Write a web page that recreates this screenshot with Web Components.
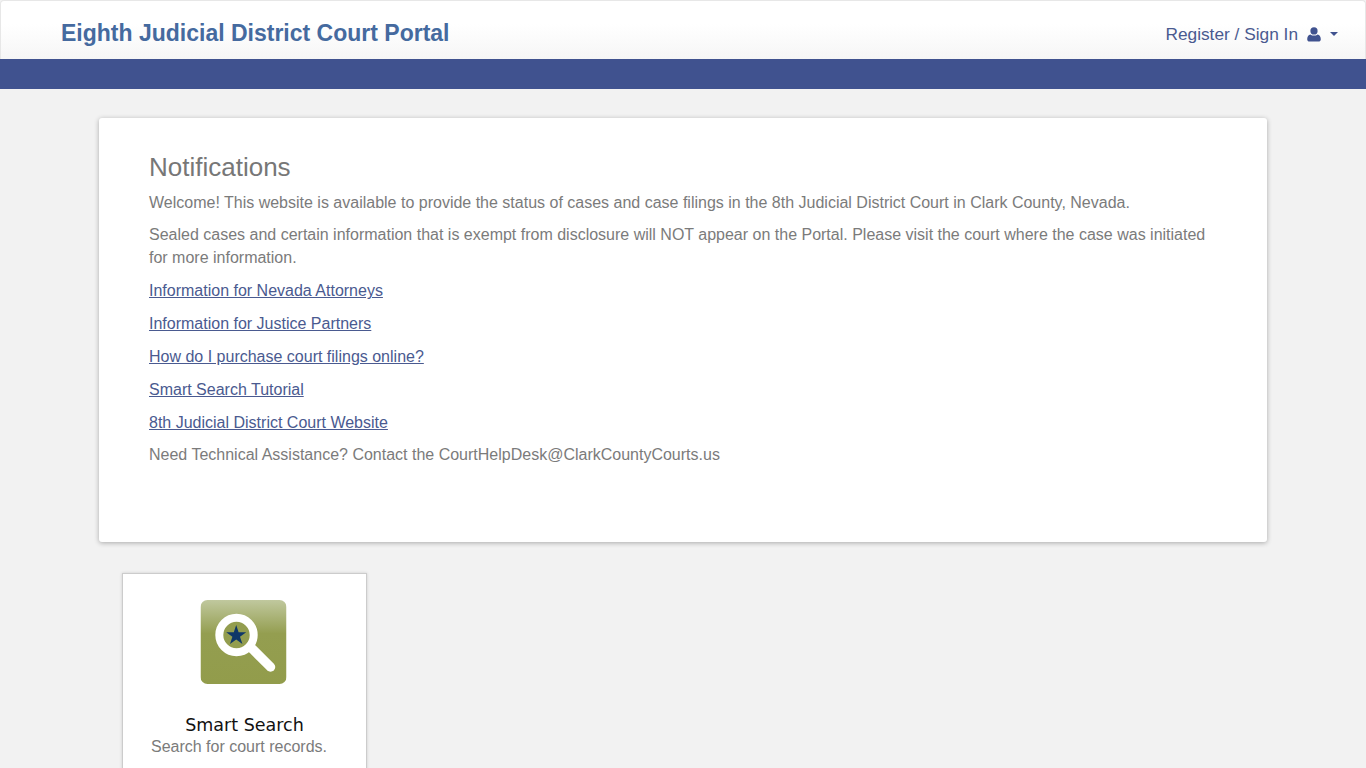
<!DOCTYPE html>
<html lang="en">
<head>
<meta charset="utf-8">
<title>Eighth Judicial District Court Portal</title>
<style>
  html, body { margin: 0; padding: 0; height: 768px; overflow: hidden; }
  body { background: #f2f2f2; font-family: "Liberation Sans", Arial, sans-serif; font-size: 16px; color: #7b7b7b; }
  a { color: #4a5a90; }
</style>
</head>
<body>
<portal-header></portal-header>
<portal-main>
  <notice-card>
    <span slot="title">Notifications</span>
    <p>Welcome! This website is available to provide the status of cases and case filings in the 8th Judicial District Court in Clark County, Nevada.</p>
    <p>Sealed cases and certain information that is exempt from disclosure will NOT appear on the Portal. Please visit the court where the case was initiated for more information.</p>
    <p><a href="#">Information for Nevada Attorneys</a></p>
    <p><a href="#">Information for Justice Partners</a></p>
    <p><a href="#">How do I purchase court filings online?</a></p>
    <p><a href="#">Smart Search Tutorial</a></p>
    <p><a href="#">8th Judicial District Court Website</a></p>
    <p>Need Technical Assistance? Contact the CourtHelpDesk@ClarkCountyCourts.us</p>
  </notice-card>
  <app-tile heading="Smart Search" text="Search for court records."></app-tile>
</portal-main>

<script>
class PortalHeader extends HTMLElement {
    constructor() {
        super();
        this.attachShadow({ mode: 'open' });
        this.shadowRoot.innerHTML = `
            <style>
                :host { display: block; }
                .top {
                    height: 51px;
                    display: flex;
                    align-items: center;
                    justify-content: space-between;
                    padding: 7px 27px 0 60px;
                    border: 1px solid #e7e7e7;
                    border-bottom: 0;
                    border-radius: 4px 4px 0 0;
                    background: linear-gradient(to bottom, #fff 0, #fff 40%, #f6f6f6 100%);
                }
                .brand { font-size: 23px; font-weight: bold; color: #456a9f; }
                .user { display: flex; align-items: center; font-size: 17.3px; color: #4a5a90; padding-top: 1px; }
                .user svg { display: block; }
                .icon { margin-left: 9px; }
                .caret { margin-left: 9px; }
                .bar { height: 30px; background: #40528f; }
            </style>
            <div class="top">
                <div class="brand">Eighth Judicial District Court Portal</div>
                <div class="user">
                    <span>Register / Sign In</span>
                    <svg class="icon" width="14" height="15" viewBox="0 0 14 15">
                        <circle cx="7" cy="3.9" r="3.6" fill="#40528f"/>
                        <path d="M0.2 12.2C0.2 9.6 1.4 7.7 3.4 7.4 4.4 8.2 5.6 8.6 7 8.6S9.6 8.2 10.6 7.4C12.6 7.7 13.8 9.6 13.8 12.2 13.8 13.7 12.8 14.6 11.5 14.6H2.5C1.2 14.6 0.2 13.7 0.2 12.2Z" fill="#40528f"/>
                    </svg>
                    <svg class="caret" width="8" height="4" viewBox="0 0 8 4"><path d="M0 0H8L4 4Z" fill="#40528f"/></svg>
                </div>
            </div>
            <div class="bar"></div>
        `;
    }
}

class PortalMain extends HTMLElement {
    constructor() {
        super();
        this.attachShadow({ mode: 'open' });
        this.shadowRoot.innerHTML = `
            <style>
                :host { display: block; padding: 29px 99px 0; }
            </style>
            <slot></slot>
        `;
    }
}

class NoticeCard extends HTMLElement {
    constructor() {
        super();
        this.attachShadow({ mode: 'open' });
        this.shadowRoot.innerHTML = `
            <style>
                :host {
                    display: block;
                    box-sizing: border-box;
                    width: 1168px;
                    height: 424px;
                    padding: 34px 50px 0;
                    background: #fff;
                    border-radius: 3px;
                    box-shadow: 0 1px 5px rgba(0,0,0,.3);
                    line-height: 1.42857;
                }
                h2 { margin: 0 0 9.65px; font-size: 26px; font-weight: normal; line-height: 30px; color: #777; }
                ::slotted(p) { margin: 0 0 10px !important; }
            </style>
            <h2><slot name="title"></slot></h2>
            <slot></slot>
        `;
    }
}

class AppTile extends HTMLElement {
    constructor() {
        super();
        this.attachShadow({ mode: 'open' });
        this.shadowRoot.innerHTML = `
            <style>
                :host {
                    display: block;
                    box-sizing: border-box;
                    width: 245px;
                    height: 220px;
                    margin: 31px 0 0 23px;
                    padding-top: 26px;
                    background: #fff;
                    border: 1px solid #ccc;
                    box-shadow: 0 0 3px rgba(0,0,0,.15);
                }
                svg { display: block; margin: 0 auto; transform: translateX(-1.5px); }
                h3 { margin: 31px 0 0; font: normal 17.5px/20px "DejaVu Sans", Verdana, sans-serif; color: #111; text-align: center; }
                p { margin: 2px 0 0; line-height: 20px; text-align: center; color: #7b7b7b; padding-right: 11px; }
            </style>
            <svg width="86" height="84" viewBox="0 0 86 84">
                <defs>
                    <linearGradient id="tile" x1="0" y1="0" x2="0" y2="1">
                        <stop offset="0" stop-color="#c0c89e"/>
                        <stop offset=".4" stop-color="#949e50"/>
                        <stop offset="1" stop-color="#929c4b"/>
                    </linearGradient>
                </defs>
                <rect x="0" y="0" width="86" height="84" rx="7" fill="url(#tile)"/>
                <line x1="52" y1="49" x2="70" y2="67" stroke="#fff" stroke-width="9.5" stroke-linecap="round"/>
                <circle cx="36" cy="35" r="17.2" fill="#939d4f" stroke="#fff" stroke-width="8"/>
                <path d="M35.7 25 38.1 32.2 45.7 32.2 39.5 36.7 41.9 43.9 35.7 39.5 29.5 43.9 31.9 36.7 25.7 32.2 33.3 32.2Z" fill="#0f3768"/>
            </svg>
            <h3></h3>
            <p></p>
        `;
    }

    connectedCallback() {
        this.shadowRoot.querySelector('h3').textContent = this.getAttribute('heading');
        this.shadowRoot.querySelector('p').textContent = this.getAttribute('text');
    }
}

customElements.define('portal-header', PortalHeader);
customElements.define('portal-main', PortalMain);
customElements.define('notice-card', NoticeCard);
customElements.define('app-tile', AppTile);
</script>
</body>
</html>
